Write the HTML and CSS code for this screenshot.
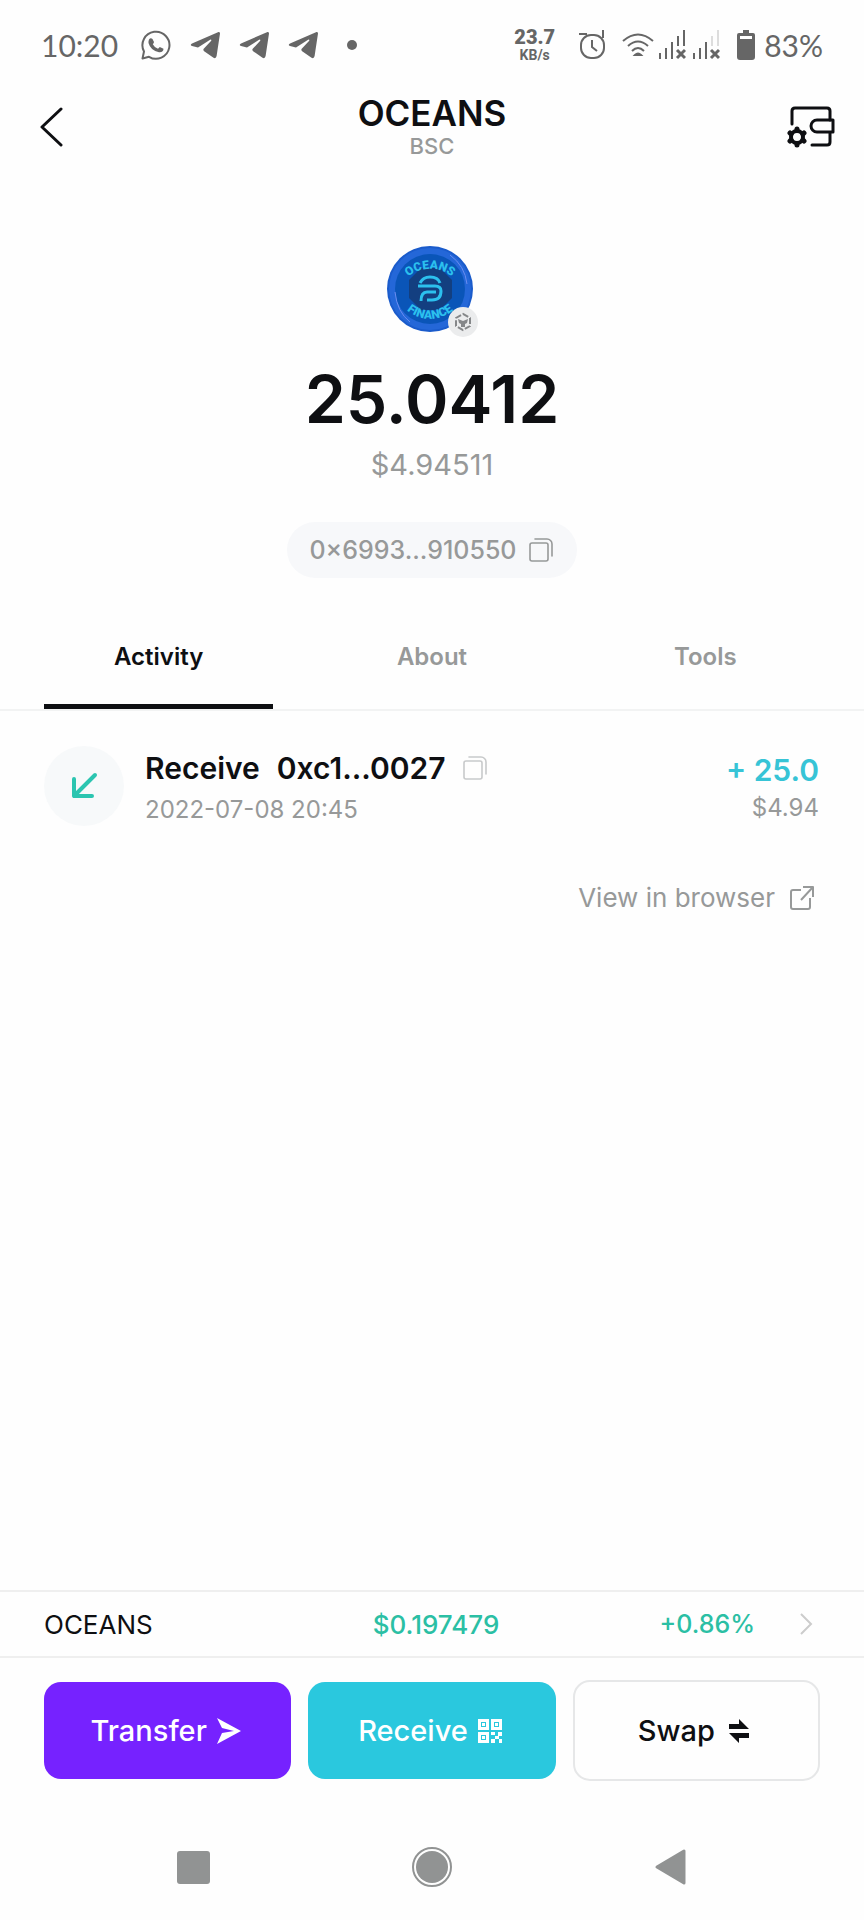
FILE: index.html
```html
<!DOCTYPE html>
<html lang="en">
<head>
  <meta charset="UTF-8">
  <meta name="viewport" content="width=device-width, initial-scale=1.0">
  <title>OCEANS</title>
  <link rel="stylesheet" href="styles.css">
</head>
<body>
  <svg class="defs" width="0" height="0">
    <symbol id="telegram" viewBox="0 0 30 28">
      <path d="M28.500 1 L2 12.500 Q-.5 14 2 15 L8 16.500 L20.500 8.500 Q22 8.500 21 10 L13.500 18 Q13 19.500 14.500 20.500 L23.500 26.800 Q26 28 26.600 25 L30 2.500 Q30 .5 28.500 1 Z" fill="#666"/>
    </symbol>
    <symbol id="copy" viewBox="0 0 24 24">
      <rect x="1" y="5" width="18" height="18" rx="2" fill="none" stroke="currentColor" stroke-width="1.600"/>
      <path d="M6 1h12a5 5 0 0 1 5 5v12" fill="none" stroke="currentColor" stroke-width="1.600" stroke-linecap="round"/>
    </symbol>
  </svg>

  <div class="screen">
    <div class="status-bar">
      <div class="status-left">
        <span class="time">10:20</span>
        <svg width="30" height="30" viewBox="0 0 30 30">
          <path d="M1.500 28.500 L3 21.500 A13.500 13.500 0 1 1 8 26.800 Z" fill="none" stroke="#666" stroke-width="2" stroke-linejoin="round"/>
          <path d="M8 9.500 Q9.500 7.500 11.500 9 L13 12 Q13 13 11.800 14.200 Q13.500 17.500 17 18.800 L18.800 17 L22.500 18.800 Q22.500 22.500 18 22.200 Q9.500 20.500 7.500 13 Q7.300 11 8 9.500 Z" fill="#666"/>
        </svg>
        <svg width="30" height="28"><use href="#telegram"/></svg>
        <svg width="30" height="28"><use href="#telegram"/></svg>
        <svg width="30" height="28"><use href="#telegram"/></svg>
        <svg width="30" height="28" viewBox="0 0 30 28"><circle cx="15" cy="14" r="5" fill="#666"/></svg>
      </div>
      <div class="status-right">
        <div class="speed"><b>23.7</b><small>KB/s</small></div>
        <svg class="alarm" width="28" height="30" viewBox="0 0 28 30" fill="none" stroke="#666" stroke-width="2">
          <rect x="3" y="5" width="23" height="23" rx="10"/>
          <path d="M1 4h8M25 0v8M14 10v7l5 4"/>
        </svg>
        <svg class="wifi" width="32" height="24" viewBox="0 0 32 24" fill="none" stroke="#666" stroke-width="2">
          <path d="M1 8Q16-5 31 8M6 13Q16 4 26 13M10 18Q16 12 22 18"/>
          <path d="M13 22Q16 19 19 22z" fill="#666"/>
        </svg>
        <svg class="signal" width="28" height="30" viewBox="0 0 28 30" stroke="#666" stroke-width="2">
          <path d="M2 23v6M8 18v11M14 12v17M20 6v10M26 0v16"/>
          <path d="M19 20l8 8M27 20l-8 8" stroke-width="3"/>
        </svg>
        <svg class="signal" width="28" height="30" viewBox="0 0 28 30" stroke="#666" stroke-width="2">
          <path d="M2 23v6M8 18v11M14 12v17"/>
          <path d="M20 6v10M26 0v16" stroke="#ddd"/>
          <path d="M19 20l8 8M27 20l-8 8" stroke-width="3"/>
        </svg>
        <svg class="battery" width="18" height="30" viewBox="0 0 18 30" fill="#666">
          <path d="M6 0h6v3h4q2 0 2 2v22q0 3-3 3H3q-3 0-3-3V5q0-2 2-2h4z"/>
          <path d="M3 6h12v3H3z" fill="#fff"/>
        </svg>
        <span class="percent">83%</span>
      </div>
    </div>

    <header class="header">
      <button class="icon-btn back" aria-label="Back">
        <svg width="24" height="40" viewBox="0 0 24 40"><path d="M21 2L2 20l19 18" fill="none" stroke="#0e0f12" stroke-width="3" stroke-linecap="round" stroke-linejoin="round"/></svg>
      </button>
      <div class="title">
        <h1>OCEANS</h1>
        <p>BSC</p>
      </div>
      <button class="icon-btn wallet" aria-label="Wallet settings">
        <svg width="48" height="42" viewBox="0 0 48 42" fill="none" stroke="#0e0f12" stroke-width="3" stroke-linecap="round" stroke-linejoin="round">
          <path d="M5 18V5q0-3 3-3h32q3 0 3 3v9M43 27v9q0 3-3 3H25"/>
          <path d="M46 14H30a6 6 0 0 0 0 12h16z"/>
          <circle cx="10" cy="31" r="6" stroke-width="4"/>
          <path d="M10 23v1M10 39v-1M3 27l1 1M17 27l-1 1M3 35l1-1M17 35l-1-1" stroke-width="5"/>
        </svg>
      </button>
    </header>

    <section class="balance">
      <div class="coin">
        <svg width="86" height="86" viewBox="0 0 86 86">
          <circle cx="43" cy="43" r="43" fill="#1a5bcb"/>
          <circle cx="43" cy="43" r="41" fill="#2467d8"/>
          <circle cx="43" cy="43" r="35" fill="#0a55b8"/>
          <path d="M63 9Q78 20 80 38M8 46Q10 66 23 76" fill="none" stroke="#6b8df0" stroke-width="1"/>
          <path d="M34 22h19l12 12v18L53 64H34L22 52V34z" fill="#133f80"/>
          <g fill="none" stroke="#2cc0ee" stroke-width="3">
            <path d="M33 37Q36 31 43 31Q51 31 53 37M31 40H48Q54 40 54 45Q54 54 45 54H40"/>
            <path d="M34 55Q34 46 40 46H49"/>
          </g>
          <path id="arc-top" d="M14 39A34 34 0 0 1 72 39" fill="none"/>
          <path id="arc-bottom" d="M12 55A36 36 0 0 0 74 55" fill="none"/>
          <text class="coin-text"><textPath href="#arc-top" startOffset="50%">OCEANS</textPath></text>
          <text class="coin-text"><textPath href="#arc-bottom" startOffset="50%">FINANCE</textPath></text>
        </svg>
        <svg class="badge" width="30" height="30" viewBox="0 0 30 30">
          <circle cx="15" cy="15" r="15" fill="#ebeced"/>
          <path d="M15 7l7 4v8l-7 4-7-4v-8z" fill="none" stroke="#858789" stroke-width="2" stroke-dasharray="6 2"/>
          <path d="M10 12l5 2 5-2-1 4-2 1v3h-4v-3l-2-1z" fill="#858789"/>
        </svg>
      </div>
      <div class="amount">25.0412</div>
      <div class="usd">$4.94511</div>
      <button class="address">0×6993...910550 <svg width="24" height="24"><use href="#copy"/></svg></button>
    </section>

    <div class="tabs" role="tablist">
      <button class="tab active" role="tab" aria-selected="true">Activity</button>
      <button class="tab" role="tab" aria-selected="false">About</button>
      <button class="tab" role="tab" aria-selected="false">Tools</button>
    </div>

    <main class="activity">
      <div class="tx">
        <div class="tx-icon">
          <svg width="28" height="28" viewBox="0 0 28 28"><path d="M25 3L4 24M4 7v17h18" fill="none" stroke="#2bc5b0" stroke-width="4" stroke-linecap="round" stroke-linejoin="round"/></svg>
        </div>
        <div class="tx-info">
          <div class="tx-title">
            <span>Receive</span>
            <span>0xc1...0027</span>
            <button class="icon-btn copy" aria-label="Copy address"><svg width="24" height="24"><use href="#copy"/></svg></button>
          </div>
          <div class="tx-small">2022-07-08 20:45</div>
        </div>
        <div class="tx-value">
          <div class="tx-plus">+ 25.0</div>
          <div class="tx-small">$4.94</div>
        </div>
      </div>
      <a href="#" class="browser-link">View in browser
        <svg width="26" height="26" viewBox="0 0 26 26" fill="none" stroke="currentColor" stroke-width="2" stroke-linejoin="round"><path d="M12 5H4q-2 0-2 2v15q0 2 2 2h15q2 0 2-2v-9M14 2h10v10M24 2L12 15"/></svg>
      </a>
    </main>

    <a href="#" class="price-row">
      <span>OCEANS</span>
      <span class="price">$0.197479</span>
      <span class="change">+0.86%
        <svg width="14" height="24" viewBox="0 0 14 24"><path d="M2 2l10 10L2 22" fill="none" stroke="#ccc" stroke-width="2"/></svg>
      </span>
    </a>

    <div class="actions">
      <button class="action transfer">Transfer
        <svg width="24" height="26" viewBox="0 0 24 26"><path d="M0 0L24 13 0 26 5 15 17 13 5 10z" fill="#fff"/></svg>
      </button>
      <button class="action receive">Receive
        <svg width="24" height="24" viewBox="0 0 24 24" fill="none" stroke="#fff" stroke-width="3">
          <path d="M1.500 1.500h8v8h-8zM14.500 1.500h8v8h-8zM1.500 14.500h8v8h-8z"/>
          <path d="M4 4h3v3H4zM17 4h3v3h-3zM4 17h3v3H4zM13 13h4v3h-4zM20 13h4v4h-4zM17 17h4v3h-4zM13 20h4v4h-4zM21 20h3v4h-3z" fill="#fff" stroke="none"/>
        </svg>
      </button>
      <button class="action swap">Swap
        <svg width="20" height="24" viewBox="0 0 20 24"><path d="M0 5h10V0l10 10H0zM20 19H10v5L0 14h20z" fill="#0e0f12"/></svg>
      </button>
    </div>

    <nav class="nav-bar">
      <button class="icon-btn" aria-label="Recent apps"><svg width="40" height="40" viewBox="0 0 40 40"><rect x="4" y="4" width="33" height="33" rx="3" fill="#919393"/></svg></button>
      <button class="icon-btn" aria-label="Home"><svg width="40" height="40" viewBox="0 0 40 40"><circle cx="20" cy="20" r="19" fill="none" stroke="#919393" stroke-width="2"/><circle cx="20" cy="20" r="16" fill="#919393"/></svg></button>
      <button class="icon-btn" aria-label="Back"><svg width="40" height="40" viewBox="0 0 40 40"><path d="M6 20L33 4v32z" fill="#919393" stroke="#919393" stroke-width="3" stroke-linejoin="round"/></svg></button>
    </nav>
  </div>
</body>
</html>
```

FILE: styles.css
```css
* {
  box-sizing: border-box;
}

body {
  font-family: Inter, "Noto Sans", sans-serif;
  background-color: #fefefe;
  color: #0e0f12;
  margin: 0;
}

h1, p {
  margin: 0;
}

svg {
  display: block;
  flex: none;
}

a {
  text-decoration: none;
}

button {
  font-family: inherit;
  border: none;
  background: none;
  padding: 0;
  cursor: pointer;
}

.defs {
  position: absolute;
}

.screen {
  min-height: 100vh;
  display: flex;
  flex-direction: column;
}

/* status bar */
.status-bar {
  height: 90px;
  padding: 0 41px;
  display: flex;
  align-items: center;
  justify-content: space-between;
  color: #666;
}

.status-left,
.status-right {
  display: flex;
  align-items: center;
}

.status-left {
  gap: 19px;
}

.time,
.percent {
  font-family: Lato, sans-serif;
  font-size: 30px;
}

.time {
  margin-right: 4px;
}

.speed {
  display: flex;
  flex-direction: column;
  align-items: center;
  font-family: Roboto, sans-serif;
  font-weight: 700;
  margin-right: 23px;
}

.speed b {
  font-size: 20px;
  line-height: 20px;
}

.speed small {
  font-size: 14px;
  line-height: 16px;
}

.alarm {
  margin-right: 16px;
}

.wifi {
  margin-right: -2px;
}

.signal {
  margin-left: 6px;
}

.battery {
  margin: 0 9px 0 17px;
}

/* header */
.header {
  display: grid;
  grid-template-columns: 1fr auto 1fr;
  align-items: center;
  height: 74px;
  padding: 0 29px;
}

.wallet {
  justify-self: end;
}

.back {
  justify-self: start;
  margin-left: 11px;
}

.title {
  text-align: center;
}

.title h1 {
  font-size: 35px;
  line-height: 38px;
  font-weight: 600;
}

.title p {
  font-size: 22px;
  line-height: 28px;
  font-weight: 500;
  color: #979999;
}

/* balance */
.balance {
  display: flex;
  flex-direction: column;
  align-items: center;
  padding-top: 82px;
}

.coin {
  position: relative;
  margin-right: 5px;
}

.coin-text {
  font-family: Roboto, sans-serif;
  font-size: 12px;
  font-weight: 900;
  fill: #2cc0ee;
  text-anchor: middle;
}

.badge {
  position: absolute;
  right: -5px;
  bottom: -5px;
}

.amount {
  font-size: 66px;
  line-height: 80px;
  font-weight: 600;
  margin-top: 27px;
}

.usd {
  font-size: 29px;
  line-height: 36px;
  color: #979999;
  margin-top: 8px;
}

.address {
  display: flex;
  align-items: center;
  gap: 12px;
  height: 56px;
  padding: 0 24px 0 22px;
  margin-top: 39px;
  border-radius: 28px;
  background-color: #f7f8fa;
  color: #979999;
  font-size: 25px;
  font-weight: 500;
}

/* tabs */
.tabs {
  display: grid;
  grid-template-columns: repeat(3, 1fr);
  gap: 44px;
  padding: 0 44px;
  margin-top: 24px;
  border-bottom: 2px solid #f2f3f3;
}

.tab {
  height: 107px;
  padding-top: 6px;
  font-size: 24px;
  font-weight: 600;
  color: #979999;
  border-bottom: 5px solid transparent;
}

.tab.active {
  color: #0e0f12;
  border-bottom-color: #0e0f12;
}

/* activity */
.activity {
  flex: 1;
  padding: 33px 45px 0 44px;
}

.tx {
  display: flex;
  align-items: center;
}

.tx-icon {
  width: 80px;
  height: 80px;
  border-radius: 50%;
  background-color: #f7f9fa;
  display: flex;
  align-items: center;
  justify-content: center;
}

.tx-info {
  flex: 1;
  margin-left: 21px;
  padding-top: 4px;
}

.tx-info .tx-small {
  margin-top: 4px;
}

.tx-title {
  display: flex;
  align-items: center;
  gap: 17px;
}

.tx-title,
.tx-plus {
  font-size: 30px;
  line-height: 40px;
  font-weight: 600;
}

.copy {
  color: #c8cacb;
}

.tx-small {
  font-size: 24px;
  line-height: 36px;
  color: #979999;
}

.tx-value {
  text-align: right;
  padding-top: 4px;
}

.tx-plus {
  color: #37c4d6;
}

.browser-link {
  display: flex;
  align-items: center;
  justify-content: flex-end;
  gap: 14px;
  margin-top: 52px;
  padding-right: 4px;
  font-size: 26px;
  line-height: 36px;
  color: #979999;
}

/* price */
.price-row {
  display: grid;
  grid-template-columns: 1fr auto 1fr;
  align-items: center;
  height: 68px;
  padding: 0 51px 0 44px;
  border-top: 2px solid #efefef;
  border-bottom: 2px solid #efefef;
  font-size: 26px;
  color: #0e0f12;
}

.price,
.change {
  color: #2bbfa4;
  font-weight: 500;
}

.price {
  padding-left: 15px;
}

.change {
  display: flex;
  align-items: center;
  justify-content: flex-end;
  gap: 44px;
  font-size: 25px;
}

/* buttons */
.actions {
  display: grid;
  grid-template-columns: repeat(3, 1fr);
  align-items: center;
  gap: 17px;
  padding: 22px 44px 0;
}

.action {
  display: flex;
  align-items: center;
  justify-content: center;
  gap: 10px;
  height: 97px;
  padding-right: 4px;
  border-radius: 17px;
  font-size: 29px;
  font-weight: 500;
  color: #fff;
}

.transfer {
  background-color: #7622ff;
}

.receive {
  background-color: #2ac8de;
}

.swap {
  height: 101px;
  gap: 14px;
  padding-right: 6px;
  border: 2px solid #e6e7e8;
  color: #0e0f12;
}

/* android navigation */
.nav-bar {
  display: flex;
  justify-content: center;
  gap: 199px;
  padding: 66px 0 33px;
}
```
